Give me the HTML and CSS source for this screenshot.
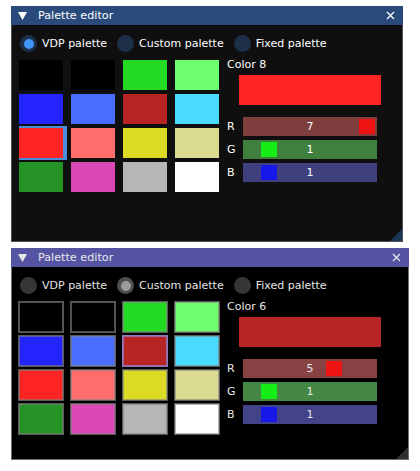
FILE: index.html
```html
<!DOCTYPE html>
<html>
  <head>
    <title>Palette editor</title>
    <link rel="stylesheet" href="styles.css">
  </head>
  <body>
    <div class="window theme-dark">
      <div class="titlebar">
        <svg class="collapse" width="9" height="8" viewBox="0 0 9 8"><polygon points="0,0 9,0 4.5,8" /></svg>
        <span class="title">Palette editor</span>
        <svg class="close" width="9" height="9" viewBox="0 0 9 9"><path d="M1 1 L8 8 M8 1 L1 8" /></svg>
      </div>
      <div class="content">
        <div class="radios">
          <div class="radio checked"><span class="circle"></span>VDP palette</div>
          <div class="radio"><span class="circle"></span>Custom palette</div>
          <div class="radio"><span class="circle"></span>Fixed palette</div>
        </div>
        <div class="editor">
          <div class="swatches">
            <div class="swatch" style="background:#000000"></div>
            <div class="swatch" style="background:#000000"></div>
            <div class="swatch" style="background:#24db24"></div>
            <div class="swatch" style="background:#6dff6d"></div>
            <div class="swatch" style="background:#2424ff"></div>
            <div class="swatch" style="background:#496dff"></div>
            <div class="swatch" style="background:#b62424"></div>
            <div class="swatch" style="background:#49dbff"></div>
            <div class="swatch selected" style="background:#ff2424"></div>
            <div class="swatch" style="background:#ff6d6d"></div>
            <div class="swatch" style="background:#dbdb24"></div>
            <div class="swatch" style="background:#dbdb92"></div>
            <div class="swatch" style="background:#249224"></div>
            <div class="swatch" style="background:#db49b6"></div>
            <div class="swatch" style="background:#b6b6b6"></div>
            <div class="swatch" style="background:#ffffff"></div>
          </div>
          <div class="details">
            <div class="color-name">Color 8</div>
            <div class="preview" style="background:#ff2424"></div>
            <div class="channels">
              <div class="channel">
                <span class="ch-label">R</span>
                <div class="slider slider-r"><span class="grab" style="left:116px"></span><span class="value">7</span></div>
              </div>
              <div class="channel">
                <span class="ch-label">G</span>
                <div class="slider slider-g"><span class="grab" style="left:18px"></span><span class="value">1</span></div>
              </div>
              <div class="channel">
                <span class="ch-label">B</span>
                <div class="slider slider-b"><span class="grab" style="left:18px"></span><span class="value">1</span></div>
              </div>
            </div>
          </div>
        </div>
      </div>
      <div class="grip"></div>
    </div>

    <div class="window theme-classic">
      <div class="titlebar">
        <svg class="collapse" width="9" height="8" viewBox="0 0 9 8"><polygon points="0,0 9,0 4.5,8" /></svg>
        <span class="title">Palette editor</span>
        <svg class="close" width="9" height="9" viewBox="0 0 9 9"><path d="M1 1 L8 8 M8 1 L1 8" /></svg>
      </div>
      <div class="content">
        <div class="radios">
          <div class="radio"><span class="circle"></span>VDP palette</div>
          <div class="radio checked"><span class="circle"></span>Custom palette</div>
          <div class="radio"><span class="circle"></span>Fixed palette</div>
        </div>
        <div class="editor">
          <div class="swatches">
            <div class="swatch" style="background:#000000"></div>
            <div class="swatch" style="background:#000000"></div>
            <div class="swatch" style="background:#24db24"></div>
            <div class="swatch" style="background:#6dff6d"></div>
            <div class="swatch" style="background:#2424ff"></div>
            <div class="swatch" style="background:#496dff"></div>
            <div class="swatch selected" style="background:#b62424"></div>
            <div class="swatch" style="background:#49dbff"></div>
            <div class="swatch" style="background:#ff2424"></div>
            <div class="swatch" style="background:#ff6d6d"></div>
            <div class="swatch" style="background:#dbdb24"></div>
            <div class="swatch" style="background:#dbdb92"></div>
            <div class="swatch" style="background:#249224"></div>
            <div class="swatch" style="background:#db49b6"></div>
            <div class="swatch" style="background:#b6b6b6"></div>
            <div class="swatch" style="background:#ffffff"></div>
          </div>
          <div class="details">
            <div class="color-name">Color 6</div>
            <div class="preview" style="background:#b62424"></div>
            <div class="channels">
              <div class="channel">
                <span class="ch-label">R</span>
                <div class="slider slider-r"><span class="grab" style="left:83px"></span><span class="value">5</span></div>
              </div>
              <div class="channel">
                <span class="ch-label">G</span>
                <div class="slider slider-g"><span class="grab" style="left:18px"></span><span class="value">1</span></div>
              </div>
              <div class="channel">
                <span class="ch-label">B</span>
                <div class="slider slider-b"><span class="grab" style="left:18px"></span><span class="value">1</span></div>
              </div>
            </div>
          </div>
        </div>
      </div>
      <div class="grip"></div>
    </div>
  </body>
</html>
```

FILE: styles.css
```css
/* Two themes of the same palette editor window */
:root {
  --font: 'DejaVu Sans', 'Liberation Sans', sans-serif;
}

body {
  margin: 0;
  padding: 6px 0 0 11px;
  background: #ffffff;
  font-family: var(--font);
  font-size: 11px;
}

/* Window frame */
.window {
  position: relative;
  box-sizing: border-box;
  display: flex;
  flex-direction: column;
  border: 1px solid var(--border);
  background: var(--bg);
  color: var(--text);
}

.theme-dark {
  --bg: #0f0f0f;
  --border: #50505a;
  --title: #294a7a;
  --text: #ffffff;
  --frame: #1d2f49;
  --check: #4296fa;
  --grip: #1a3556;
  width: 392px;
  height: 236px;
  margin-bottom: 6px;
}

.theme-classic {
  --bg: #000000;
  --border: #6e6e6e;
  --title: #5454a3;
  --text: #e6e6e6;
  --frame: #363636;
  --check: #9b9b9b;
  --grip: #2e2e2e;
  width: 398px;
  height: 212px;
}

.titlebar {
  height: 19px;
  margin: -1px -1px 0 -1px;
  padding: 0 8px 0 7px;
  display: flex;
  align-items: center;
  background: var(--title);
  color: var(--text);
  font-size: 11.2px;
}

.collapse {
  fill: var(--text);
  margin-right: 11px;
}

.title {
  flex: 1;
}

.close {
  stroke: var(--text);
  stroke-width: 1.3;
}

.theme-classic .close {
  margin-right: 0;
}

.content {
  padding: 10px 7px 0 7px;
}

/* Radio buttons */
.radios {
  display: flex;
  gap: 10px;
  height: 17px;
  align-items: center;
  padding-left: 1px;
}

.radio {
  display: flex;
  align-items: center;
  gap: 5px;
  font-size: 11px;
}

.circle {
  width: 17px;
  height: 17px;
  border-radius: 50%;
  background: var(--frame);
  display: flex;
  align-items: center;
  justify-content: center;
}

.radio.checked .circle:after {
  content: '';
  width: 10px;
  height: 10px;
  border-radius: 50%;
  background: var(--check);
}

.theme-classic .radio.checked .circle {
  background: #4e4e4e;
}

/* Palette grid and detail panel */
.editor {
  display: flex;
  gap: 8px;
  margin-top: 8px;
}

.swatches {
  display: grid;
  grid-template-columns: repeat(4, 44px);
  grid-auto-rows: 30px;
  column-gap: 8px;
  row-gap: 4px;
}

.theme-dark .swatch.selected {
  box-shadow: 2px 0 0 2px #4b8fdc;
}

.theme-classic .swatch {
  box-shadow: 0 0 0 1px #5a5a5a, inset 0 0 0 1px rgba(128, 128, 128, 0.6);
}

.theme-classic .swatch.selected {
  box-shadow: 0 0 0 1px #8c7ab8, inset 0 0 0 1px rgba(150, 130, 220, 0.7);
}

.details {
  display: flex;
  flex-direction: column;
}

.color-name {
  line-height: 10px;
  height: 10px;
}

.preview {
  width: 142px;
  height: 30px;
  margin: 5px 0 0 12px;
}

.channels {
  display: flex;
  flex-direction: column;
  gap: 4px;
  margin-top: 12px;
}

.channel {
  display: flex;
  align-items: center;
}

.ch-label {
  width: 16px;
}

.slider {
  position: relative;
  width: 134px;
  height: 19px;
  display: flex;
  align-items: center;
  justify-content: center;
}

.slider-r { background: #7e3e3e; }
.slider-g { background: #3f803f; }
.slider-b { background: #40407f; }

.theme-classic .slider-r { background: #874343; }
.theme-classic .slider-g { background: #448744; }
.theme-classic .slider-b { background: #434387; }

.grab {
  position: absolute;
  top: 2px;
  width: 16px;
  height: 15px;
}

.slider-r .grab { background: #ee1414; }
.slider-g .grab { background: #14ee14; }
.slider-b .grab { background: #1717ea; }

.value {
  position: relative;
}

/* Resize grip in the lower right corner */
.grip {
  position: absolute;
  right: 0;
  bottom: 0;
  width: 0;
  height: 0;
  border-left: 12px solid transparent;
  border-bottom: 12px solid var(--grip);
}
```
